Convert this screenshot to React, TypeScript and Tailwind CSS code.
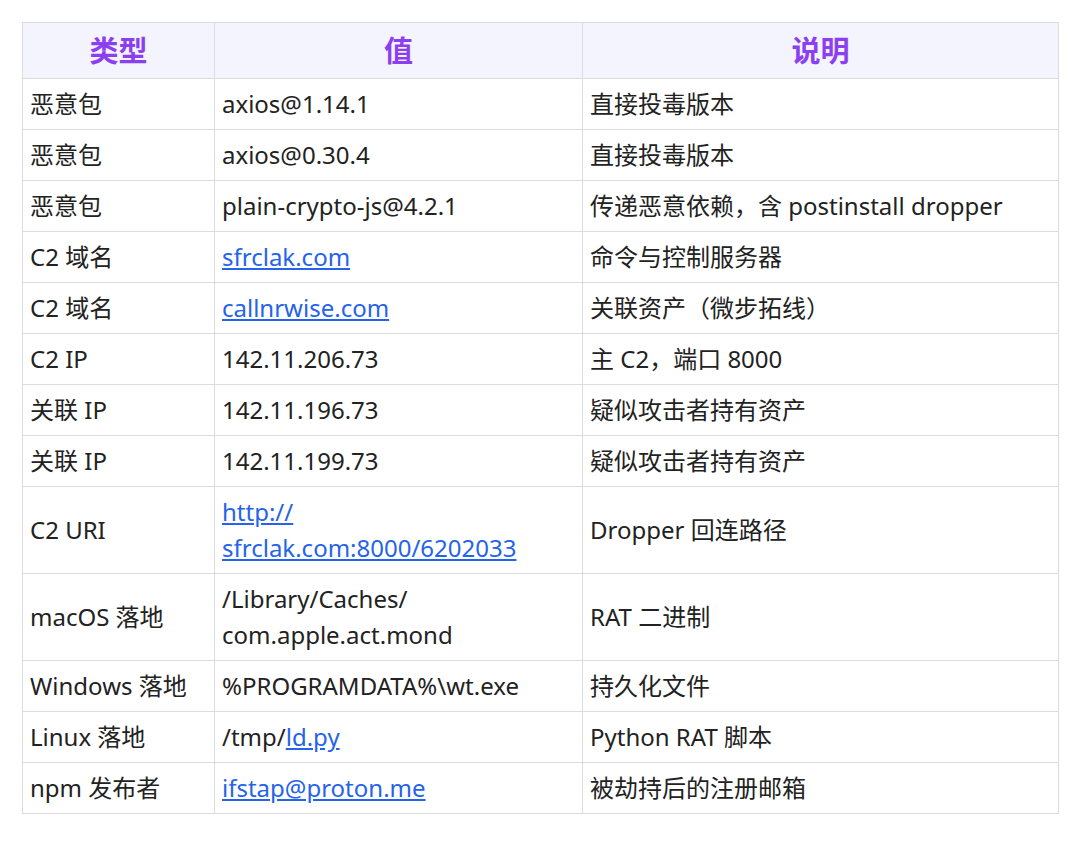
import React from "react";

const L = ({ c }: { c: string }) => <span className="text-[#2563eb] underline underline-offset-2">{c}</span>;

const rows: [React.ReactNode, React.ReactNode, React.ReactNode][] = [
  ["恶意包", "axios@1.14.1", "直接投毒版本"],
  ["恶意包", "axios@0.30.4", "直接投毒版本"],
  ["恶意包", "plain-crypto-js@4.2.1", "传递恶意依赖，含 postinstall dropper"],
  ["C2 域名", <L c="sfrclak.com" />, "命令与控制服务器"],
  ["C2 域名", <L c="callnrwise.com" />, "关联资产（微步拓线）"],
  ["C2 IP", "142.11.206.73", "主 C2，端口 8000"],
  ["关联 IP", "142.11.196.73", "疑似攻击者持有资产"],
  ["关联 IP", "142.11.199.73", "疑似攻击者持有资产"],
  ["C2 URI", <><L c="http://" /><br /><L c="sfrclak.com:8000/6202033" /></>, "Dropper 回连路径"],
  ["macOS 落地", <>/Library/Caches/<br />com.apple.act.mond</>, "RAT 二进制"],
  ["Windows 落地", "%PROGRAMDATA%\\wt.exe", "持久化文件"],
  ["Linux 落地", <>/tmp/<L c="ld.py" /></>, "Python RAT 脚本"],
  ["npm 发布者", <L c="ifstap@proton.me" />, "被劫持后的注册邮箱"],
];

export default function App() {
  return (
    <div className="w-[1080px] h-[844px] bg-white pt-[22px] pl-[22px]" style={{ fontFamily: '"Noto Sans","Noto Sans CJK SC",sans-serif' }}>
      <table className="border-collapse text-[24px] text-[#222] w-[1036px] table-fixed">
        <colgroup>
          <col className="w-[192px]" />
          <col className="w-[368px]" />
          <col className="w-[476px]" />
        </colgroup>
        <thead>
          <tr className="bg-[#f3f4fd] h-[56px]">
            {["类型", "值", "说明"].map((h) => (
              <th key={h} className="border border-[#dcdcdc] text-[29px] font-bold text-[#8b3ff0] text-center">{h}</th>
            ))}
          </tr>
        </thead>
        <tbody>
          {rows.map((r, i) => (
            <tr key={i}>
              {r.map((c, j) => (
                <td key={j} className="border border-[#dcdcdc] px-[7px] py-[7px] leading-[36px] align-middle whitespace-nowrap">{c}</td>
              ))}
            </tr>
          ))}
        </tbody>
      </table>
    </div>
  );
}
